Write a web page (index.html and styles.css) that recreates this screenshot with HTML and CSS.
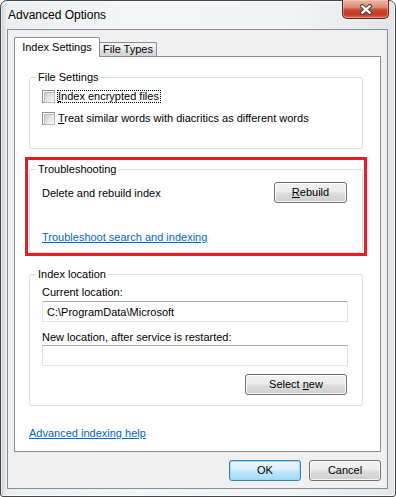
FILE: index.html
```html
<!DOCTYPE html>
<html lang="en">
<head>
<meta charset="utf-8">
<title>Advanced Options</title>
<link rel="stylesheet" href="styles.css">
</head>
<body>
<div class="window">
  <div class="titlebar">
    <span class="title">Advanced Options</span>
    <button class="close" aria-label="Close">
      <svg width="14" height="11" viewBox="0 0 14 11"><path d="M3.2 2.2L10.8 8.8M10.8 2.2L3.2 8.8" stroke="#3e4150" stroke-width="4.4" stroke-linecap="round" fill="none"/><path d="M3.2 2.2L10.8 8.8M10.8 2.2L3.2 8.8" stroke="#ffffff" stroke-width="2.4" stroke-linecap="round" fill="none"/></svg>
    </button>
  </div>
  <div class="client">
    <div class="tabs">
      <div class="tab tab-active">Index Settings</div>
      <div class="tab tab-other">File Types</div>
    </div>
    <div class="panel">
      <fieldset class="group group-file">
        <legend>File Settings</legend>
        <label class="check"><span class="cb"></span><span class="cb-text focus"><u>I</u>ndex encrypted files</span></label>
        <label class="check"><span class="cb"></span><span class="cb-text"><u>T</u>reat similar words with diacritics as different words</span></label>
      </fieldset>
      <div class="highlight">
        <fieldset class="group group-trouble">
          <legend>Troubleshooting</legend>
          <div class="row">
            <span>Delete and rebuild index</span>
            <button class="btn btn-rebuild"><u>R</u>ebuild</button>
          </div>
          <a class="link link-trouble" href="#">Troubleshoot search and indexing</a>
        </fieldset>
        <div class="redbox"></div>
      </div>
      <fieldset class="group group-loc">
        <legend>Index location</legend>
        <div class="label">Current location:</div>
        <input class="field field-current" type="text" value="C:\ProgramData\Microsoft" readonly>
        <div class="label label-new">New location, after service is restarted:</div>
        <input class="field field-new" type="text" value="" readonly>
        <div class="select-row">
          <button class="btn btn-select">Select <u>n</u>ew</button>
        </div>
      </fieldset>
      <a class="link link-help" href="#">Advanced indexing help</a>
    </div>
    <div class="actions">
      <button class="btn btn-dialog btn-default">OK</button>
      <button class="btn btn-dialog">Cancel</button>
    </div>
  </div>
</div>
</body>
</html>
```

FILE: styles.css
```css
* { box-sizing: border-box; }
html, body { margin: 0; padding: 0; background: #ffffff; }
body {
  font-family: "Liberation Sans", Arial, sans-serif;
  font-size: 11px;
  color: #000;
}
.window {
  width: 396px;
  height: 497px;
  border: 1px solid #444649;
  border-radius: 7px 7px 3px 3px;
  padding: 0 7px 7px 6px;
  display: flex;
  flex-direction: column;
  background: linear-gradient(to right, #aeb5bb 0, #d9dee2 2px, #eceff1 6px, #f4f5f6 35%, #f2f3f4 75%, #e3e6e9 100%);
  box-shadow: inset 0 0 0 1px rgba(255, 255, 255, 0.7);
}
.titlebar {
  flex: none;
  height: 28px;
  display: flex;
  justify-content: space-between;
  align-items: flex-start;
}
.title {
  font-size: 12px;
  line-height: 14px;
  margin: 7px 0 0 1px;
  text-shadow: 0 0 5px #fff;
}
.close {
  width: 47px;
  height: 19px;
  margin: -1px -1px 0 0;
  padding: 0;
  border: 1px solid #5d2318;
  border-top: none;
  border-radius: 0 0 5px 5px;
  background: linear-gradient(#ecb7a8 0, #de8c76 40%, #c9462e 55%, #c33a22 80%, #d66a50 100%);
  box-shadow: inset 0 0 0 1px rgba(255, 210, 195, 0.45);
  display: flex;
  align-items: center;
  justify-content: center;
}
.close svg { display: block; }
.client {
  flex: 1;
  border: 1px solid #8b8d90;
  background: #f0f0f0;
  padding: 7px 0 7px 0;
  display: flex;
  flex-direction: column;
}
.tabs {
  display: flex;
  align-items: flex-end;
  height: 20px;
  margin-left: 6px;
}
.tab {
  border: 1px solid #898c95;
  border-bottom: none;
  border-radius: 2px 2px 0 0;
  text-align: center;
  white-space: nowrap;
}
.tab-active {
  width: 86px;
  height: 20px;
  padding-top: 2px;
  line-height: 14px;
  background: #fff;
  position: relative;
  z-index: 1;
}
.tab-other {
  width: 58px;
  height: 15px;
  line-height: 13px;
  margin-left: -1px;
  background: linear-gradient(#f3f3f3 0, #ebebeb 50%, #dddddd 51%, #d3d3d3 100%);
}
.panel {
  margin: -1px 6px 0 6px;
  border: 1px solid #898c95;
  background: #fff;
  padding: 13px 17px 11px 14px;
}
.group {
  margin: 0;
  border: 1px solid #d5dfe5;
  border-radius: 3px;
  min-width: 0;
}
.group legend {
  padding: 0 2px;
  margin-left: -6px;
  line-height: 15px;
}
.group-file { padding: 4px 14px 23px 12px; }
.check {
  display: flex;
  align-items: center;
  height: 14px;
}
.check + .check { margin-top: 8px; }
.cb {
  flex: none;
  width: 13px;
  height: 13px;
  border: 1px solid #8e8f8f;
  background: #fff;
  padding: 1px;
  margin-right: 2px;
}
.cb::after {
  content: "";
  display: block;
  width: 9px;
  height: 9px;
  border: 1px solid #b7bcc2;
  background: linear-gradient(135deg, #cdd1d6 0, #e4e6e8 50%, #f7f7f7 100%);
}
.cb-text {
  border: 1px solid transparent;
  padding: 0 1px 0 0;
  line-height: 11px;
  white-space: nowrap;
}
.cb-text.focus { border: 1px dotted #000; }
.highlight {
  position: relative;
  margin-top: 13px;
}
.group-trouble { padding: 5px 14px 8px 12px; }
.row {
  display: flex;
  justify-content: space-between;
  align-items: center;
  height: 21px;
}
.link {
  display: block;
  color: #0066cc;
  text-decoration: underline;
  line-height: 14px;
  width: max-content;
}
.link-trouble { margin-top: 27px; }
.redbox {
  position: absolute;
  top: -5px;
  left: -4px;
  right: -4px;
  bottom: -3px;
  border: 3px solid #ed1c24;
  pointer-events: none;
}
.group-loc {
  margin-top: 14px;
  padding: 3px 14px 10px 12px;
}
.label { line-height: 14px; }
.label-new { margin-top: 8px; }
.field {
  display: block;
  width: 100%;
  height: 21px;
  margin: 2px 0 0 0;
  border: 1px solid;
  border-color: #abadb3 #dbdfe6 #e3e9ef #e2e3ea;
  padding: 0 4px;
  font: inherit;
  font-size: 11px;
  color: #000;
  background: #fff;
  outline: none;
}
.field-new { margin-top: 1px; }
.select-row {
  display: flex;
  justify-content: flex-end;
  margin-top: 8px;
}
.link-help { margin-top: 20px; }
.btn {
  font: inherit;
  font-size: 11px;
  color: #000;
  height: 21px;
  padding: 0;
  line-height: 19px;
  border: 1px solid #707070;
  border-radius: 3px;
  background: linear-gradient(#f2f2f2 0, #ebebeb 48%, #dddddd 52%, #cfcfcf 100%);
  box-shadow: inset 0 0 0 1px rgba(255, 255, 255, 0.8);
  text-align: center;
}
.btn-rebuild { width: 73px; margin-right: 1px; }
.btn-select { width: 102px; margin-right: 1px; }
.actions {
  display: flex;
  justify-content: flex-end;
  gap: 8px;
  margin: 8px 6px 0 0;
}
.btn-dialog { width: 72px; }
.btn-default {
  border-color: #3c7fb1;
  background: linear-gradient(#eaf6fd 0, #d9f0fc 48%, #bee6fd 52%, #a7d9f5 100%);
  box-shadow: inset 0 0 0 1px rgba(150, 215, 245, 0.9);
}
```
